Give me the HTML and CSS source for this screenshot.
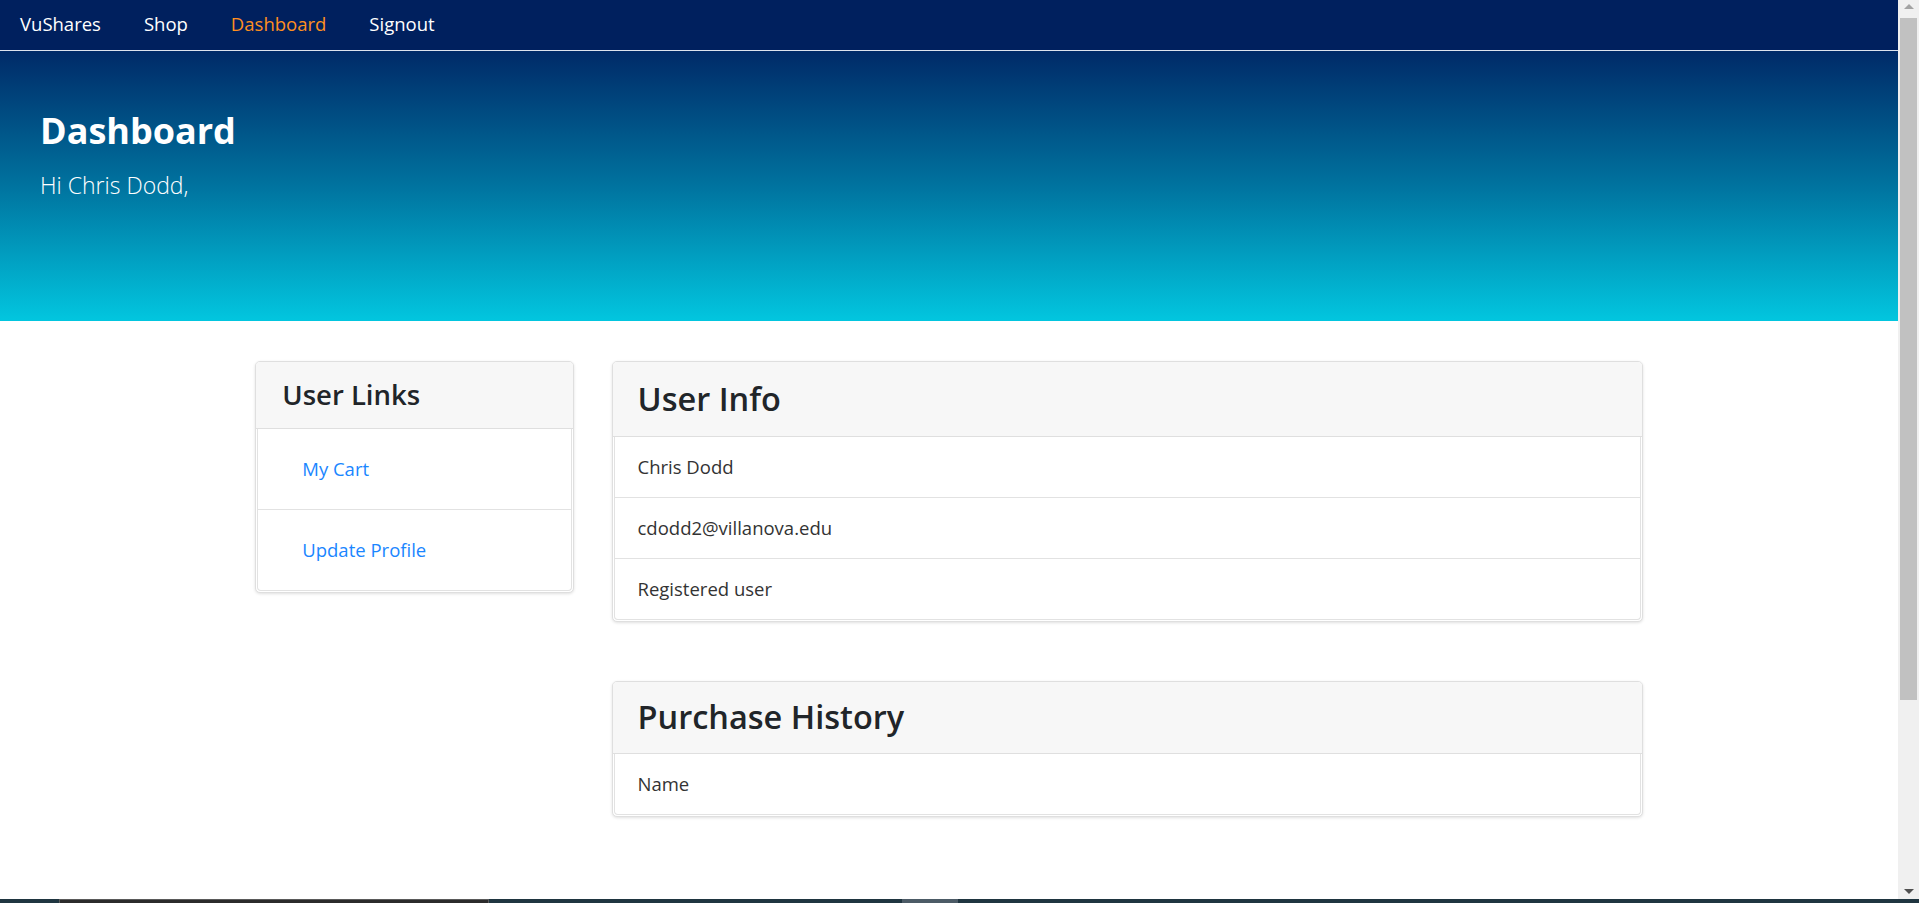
FILE: index.html
```html
<!DOCTYPE html>
<html lang="en">
<head>
<meta charset="utf-8">
<title>Dashboard - VuShares</title>
<link rel="stylesheet" href="styles.css">
</head>
<body>
<div class="screen">
  <div class="viewport">
    <div class="page">
      <nav class="topnav">
        <a class="nav-link" href="#">VuShares</a>
        <a class="nav-link" href="#">Shop</a>
        <a class="nav-link active" href="#">Dashboard</a>
        <a class="nav-link" href="#">Signout</a>
      </nav>
      <header class="hero">
        <h1 class="hero-title">Dashboard</h1>
        <p class="hero-sub">Hi Chris Dodd,</p>
      </header>
      <main class="container">
        <aside class="card links-card">
          <div class="card-header links-header"><h3 class="card-title-sm">User Links</h3></div>
          <ul class="list-group">
            <li class="list-item link-item"><a href="#" class="user-link">My Cart</a></li>
            <li class="list-item link-item"><a href="#" class="user-link">Update Profile</a></li>
          </ul>
        </aside>
        <section class="main-col">
          <div class="card">
            <div class="card-header"><h2 class="card-title">User Info</h2></div>
            <ul class="list-group">
              <li class="list-item">Chris Dodd</li>
              <li class="list-item">cdodd2@villanova.edu</li>
              <li class="list-item">Registered user</li>
            </ul>
          </div>
          <div class="card history-card">
            <div class="card-header history-header"><h2 class="card-title">Purchase History</h2></div>
            <ul class="list-group">
              <li class="list-item">Name</li>
            </ul>
          </div>
        </section>
      </main>
    </div>
    <div class="scrollbar">
      <span class="arrow arrow-up"></span>
      <div class="track"><div class="thumb"></div></div>
      <span class="arrow arrow-down"></span>
    </div>
  </div>
  <div class="taskbar">
    <span class="tb tb-a"></span>
    <span class="tb tb-b"></span>
    <span class="tb tb-c"></span>
    <span class="tb tb-d"></span>
    <span class="tb tb-e"></span>
  </div>
</div>
</body>
</html>
```
FILE: styles.css
```css
* { box-sizing: border-box; }
html, body { margin: 0; padding: 0; }
body {
  font-family: "Open Sans", "Noto Sans", sans-serif;
  color: #212529;
  background: #fff;
  overflow: hidden;
}
.screen {
  width: 1919px;
  height: 903px;
  display: flex;
  flex-direction: column;
}
.viewport {
  flex: 1;
  display: flex;
  min-height: 0;
}
.page {
  flex: 1;
  min-width: 0;
  background: #fff;
}
.topnav {
  height: 51px;
  background: #00205e;
  border-bottom: 1px solid #dde3ee;
  display: flex;
  align-items: center;
  gap: 43px;
  padding-left: 20px;
  padding-bottom: 2px;
}
.nav-link {
  color: #fff;
  text-decoration: none;
  font-size: 18.5px;
  line-height: 30px;
}
.nav-link.active { color: #ff8f1f; }
.hero {
  height: 270px;
  background: linear-gradient(to bottom, #002a68 0%, #00739f 50%, #02c6df 100%);
  padding: 56px 40px 0;
  color: #fff;
}
.hero-title {
  margin: 0;
  font-size: 36px;
  font-weight: 700;
  line-height: 48px;
}
.hero-sub {
  margin: 15px 0 0;
  font-size: 23px;
  font-weight: 300;
  line-height: 30px;
}
.container {
  width: 1387.5px;
  margin: 40px auto 0;
  display: grid;
  grid-template-columns: 318.75px 1031.25px;
  column-gap: 37.5px;
  align-items: start;
}
.main-col {
  display: flex;
  flex-direction: column;
  gap: 59px;
}
.card {
  border: 1px solid #dfdfdf;
  border-radius: 5px;
  background: #fff;
  box-shadow: 0 1px 3px rgba(0, 0, 0, 0.12);
  overflow: hidden;
}
.card-header {
  background: #f7f7f7;
  border-bottom: 1px solid #dfdfdf;
  padding: 14px 25px;
}
.links-header { padding: 13px 26px 14px; }
.history-header { padding: 12px 25px 13px; }
.card-title {
  margin: 0;
  font-size: 32.5px;
  font-weight: 600;
  line-height: 46px;
}
.card-title-sm {
  margin: 0;
  font-size: 27.5px;
  font-weight: 600;
  line-height: 39px;
}
.list-group {
  list-style: none;
  margin: 0 1px 1px;
  padding: 0;
  border: 1px solid #e2e2e2;
  border-top: 0;
  border-radius: 0 0 4px 4px;
}
.list-item {
  padding: 15px 23px;
  font-size: 18.5px;
  line-height: 30px;
  color: #333;
  border-bottom: 1px solid #e2e2e2;
}
.list-item:last-child { border-bottom: 0; }
.link-item { padding: 25px 44px; }
.user-link {
  color: #1a86ff;
  text-decoration: none;
}
.scrollbar {
  width: 21px;
  background: #f0f0f0;
  display: flex;
  flex-direction: column;
  align-items: center;
}
.arrow {
  width: 0;
  height: 0;
  border-left: 5px solid transparent;
  border-right: 5px solid transparent;
}
.arrow-up {
  margin-top: 4px;
  border-bottom: 5px solid #a3a3a3;
}
.arrow-down {
  margin-bottom: 5px;
  border-top: 5px solid #505050;
}
.track {
  flex: 1;
  width: 100%;
  padding: 9px 2px 0;
}
.thumb {
  width: 17px;
  height: 682px;
  background: #c1c1c1;
}
.taskbar {
  height: 4px;
  display: flex;
  background: #1f3540;
}
.tb { display: block; height: 100%; }
.tb-a { width: 59px; }
.tb-b { width: 430px; background: #2b2b2b; border-top: 1px solid #5a5a5a; border-left: 1px solid #5a5a5a; border-right: 1px solid #5a5a5a; }
.tb-c { width: 413px; }
.tb-d { width: 56px; background: #4c5b66; }
.tb-e { flex: 1; }
```
